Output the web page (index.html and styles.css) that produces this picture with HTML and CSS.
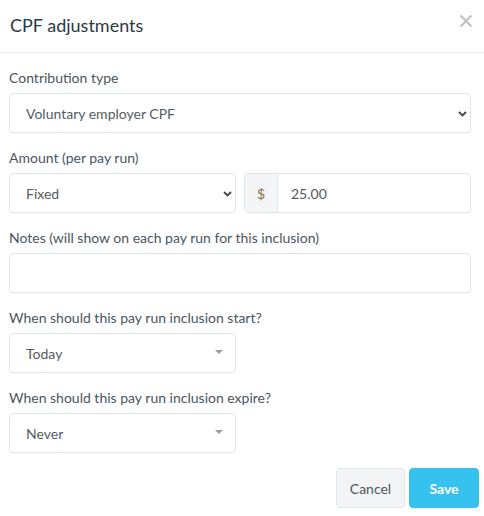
FILE: index.html
```html
<!DOCTYPE html>
<html>
<head>
<meta charset="utf-8">
<link rel="stylesheet" href="styles.css">
</head>
<body>
<div class="modal">
  <div class="modal-header">
    <h1 class="title">CPF adjustments</h1>
    <span class="close" aria-label="Close">
      <svg width="14" height="14" viewBox="0 0 14 14"><path d="M1.5 1.5 L12.5 12.5 M12.5 1.5 L1.5 12.5" stroke="#c4c4c4" stroke-width="2.4" stroke-linecap="butt"/></svg>
    </span>
  </div>
  <div class="modal-body">
    <div class="group">
      <div class="label">Contribution type</div>
      <div class="control select">
        <span>Voluntary employer CPF</span>
        <svg class="chev" width="9" height="6" viewBox="0 0 9 6"><path d="M1 1 L4.5 4.5 L8 1" fill="none" stroke="#444" stroke-width="1.8"/></svg>
      </div>
    </div>
    <div class="group">
      <div class="label">Amount (per pay run)</div>
      <div class="row">
        <div class="control select half">
          <span>Fixed</span>
          <svg class="chev" width="9" height="6" viewBox="0 0 9 6"><path d="M1 1 L4.5 4.5 L8 1" fill="none" stroke="#444" stroke-width="1.8"/></svg>
        </div>
        <div class="control input-group half">
          <span class="addon">$</span>
          <span class="value">25.00</span>
        </div>
      </div>
    </div>
    <div class="group">
      <div class="label">Notes (will show on each pay run for this inclusion)</div>
      <div class="control"></div>
    </div>
    <div class="group">
      <div class="label">When should this pay run inclusion start?</div>
      <div class="control select half">
        <span>Today</span>
        <svg class="caret" width="8" height="4" viewBox="0 0 8 4"><path d="M0 0 L8 0 L4 4 Z" fill="#999"/></svg>
      </div>
    </div>
    <div class="group">
      <div class="label">When should this pay run inclusion expire?</div>
      <div class="control select half">
        <span>Never</span>
        <svg class="caret" width="8" height="4" viewBox="0 0 8 4"><path d="M0 0 L8 0 L4 4 Z" fill="#999"/></svg>
      </div>
    </div>
  </div>
  <div class="modal-footer">
    <button class="btn btn-cancel">Cancel</button>
    <button class="btn btn-save">Save</button>
  </div>
</div>
</body>
</html>
```
FILE: styles.css
```css
* { box-sizing: border-box; }
html, body { margin: 0; padding: 0; background: #fff; }
body {
  font-family: "Lato", "Open Sans", Arial, sans-serif;
  color: #4b5660;
  width: 484px;
}
.modal { width: 484px; }
.modal-header {
  height: 53px;
  border-bottom: 1px solid #e6ecef;
  display: flex;
  align-items: flex-start;
  justify-content: space-between;
  padding: 14px 11px 0 10px;
}
.title {
  margin: 0;
  font-size: 18px;
  font-weight: 400;
  line-height: 22px;
  color: #2c3a44;
}
.close { display: block; }
.close svg { display: block; }
.modal-body {
  padding: 17px 13px 0 9px;
}
.group { margin-bottom: 17px; }
.group:last-child { margin-bottom: 15px; }
.label {
  font-size: 14px;
  line-height: 16px;
  height: 16px;
  margin-bottom: 7px;
  color: #4b5660;
}
.control {
  height: 40px;
  border: 1px solid #dfe5e8;
  border-radius: 4px;
  background: #fff;
  font-size: 14px;
  color: #555b60;
}
.select {
  display: flex;
  align-items: center;
  justify-content: space-between;
  padding: 0 3px 0 16px;
}
.select .chev { margin-top: 1px; }
.select .caret { margin-right: 9px; margin-top: -2px; }
.half { width: 227px; }
.row { display: flex; gap: 8px; }
.input-group {
  display: flex;
  align-items: stretch;
  overflow: hidden;
}
.addon {
  width: 33px;
  background: #f3f5f7;
  border-right: 1px solid #dfe5e8;
  display: flex;
  align-items: center;
  justify-content: center;
  color: #8a6d3b;
}
.value {
  display: flex;
  align-items: center;
  padding-left: 13px;
}
.modal-footer {
  display: flex;
  justify-content: flex-end;
  gap: 4px;
  padding-right: 5px;
}
.btn {
  height: 40px;
  border-radius: 4px;
  font-family: inherit;
  font-size: 14px;
  padding: 0;
  cursor: pointer;
}
.btn-cancel {
  width: 69px;
  background: #f3f4f6;
  border: 1px solid #e2e5e8;
  color: #4b5660;
}
.btn-save {
  width: 70px;
  background: #35c2ef;
  border: 1px solid #35c2ef;
  color: #fff;
  font-weight: 700;
}
```
